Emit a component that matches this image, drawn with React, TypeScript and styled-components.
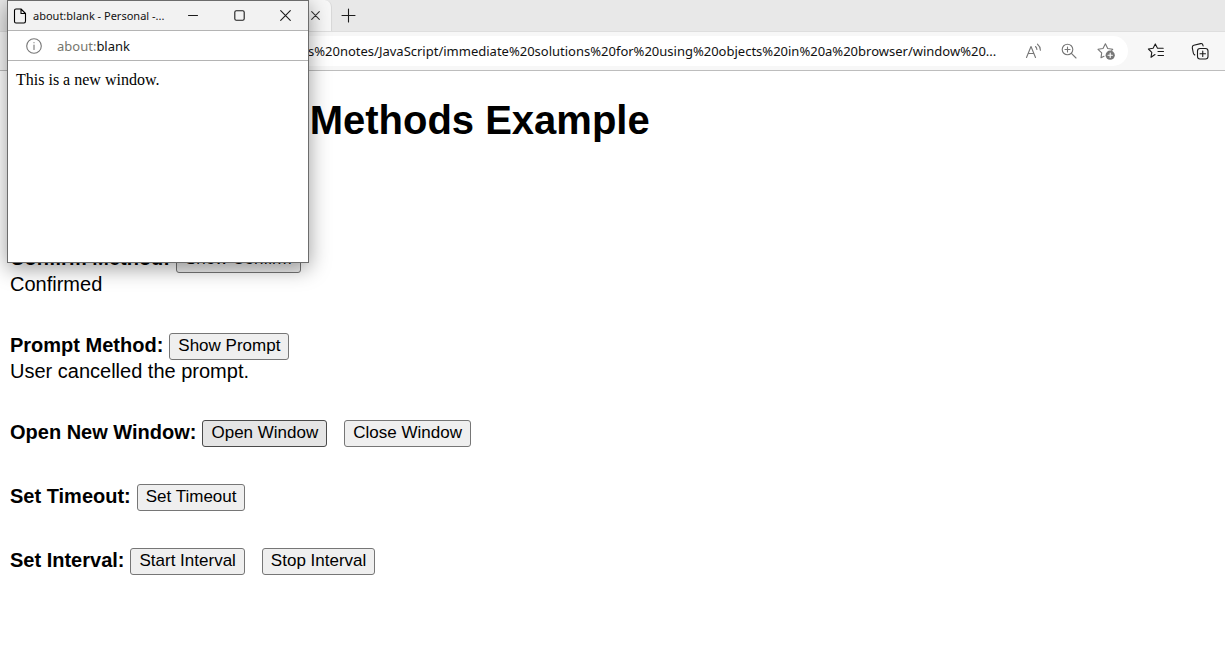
import React from 'react';
import styled, { createGlobalStyle } from 'styled-components';

const GlobalStyle = createGlobalStyle`
  * { box-sizing: border-box; }
  body { margin: 0; background: #fff; color: #000; }
`;

const uiFont = `'Noto Sans', 'Open Sans', sans-serif`;
const pageFont = `'Liberation Sans', Arial, sans-serif`;

const Browser = styled.div`
  position: relative;
  min-height: 100vh;
  overflow: hidden;
`;

const TabStrip = styled.div`
  display: flex;
  height: 31px;
  padding-left: 8px;
  background: #e8e8e8;
`;

const Tab = styled.div`
  display: flex;
  align-items: center;
  justify-content: flex-end;
  width: 324px;
  padding-right: 11px;
  background: #f7f7f7;
  border-right: 1px solid #d9d9d9;
  border-top-right-radius: 7px;
`;

const IconButton = styled.button<{ $width: number; $color?: string }>`
  display: flex;
  align-items: center;
  justify-content: center;
  flex: none;
  width: ${(p) => p.$width}px;
  height: 30px;
  padding: 0;
  border: 0;
  background: transparent;
  color: ${(p) => p.$color ?? '#1b1b1b'};
`;

const Toolbar = styled.div`
  display: flex;
  align-items: center;
  height: 40px;
  padding-left: 60px;
  padding-right: 3px;
  background: #f7f7f7;
  border-top: 1px solid #dedede;
  border-bottom: 1px solid #bdbdbd;
`;

const AddressBar = styled.div`
  display: flex;
  flex: 1;
  align-items: center;
  height: 30px;
  margin-right: 6px;
  padding-left: 248px;
  padding-right: 4px;
  border-radius: 15px;
  background: #fff;
`;

const AddressInput = styled.input`
  flex: 1;
  min-width: 0;
  height: 28px;
  padding: 0;
  border: 0;
  outline: 0;
  background: transparent;
  color: #111;
  font: 13px/18px ${uiFont};
`;

const Page = styled.main`
  padding: 26px 10px;
  font: 20px/23px ${pageFont};
`;

const Title = styled.h1`
  margin: 0 0 16px;
  font-size: 40px;
  line-height: 46px;
  white-space: nowrap;
`;

const Example = styled.section`
  margin-bottom: 37px;
`;

const Row = styled.div`
  display: flex;
  height: 27px;
`;

const Label = styled.strong`
  margin-right: 6px;
  line-height: 25px;
`;

const Actions = styled.div`
  display: flex;
  gap: 17px;
`;

const Action = styled.button<{ $active?: boolean }>`
  height: 27px;
  padding: 0 8px 2px;
  border: 1px solid ${(p) => (p.$active ? '#4a4a4a' : '#767676')};
  border-radius: 3px;
  background: ${(p) => (p.$active ? '#e5e5e5' : '#efefef')};
  color: #000;
  font: 17px/20px ${pageFont};
`;

const Status = styled.p`
  min-height: 23px;
  margin: 0;
`;

const Popup = styled.div`
  position: absolute;
  top: 0;
  left: 7px;
  width: 302px;
  height: 263px;
  border: 1px solid #6c6c6c;
  background: #fff;
  box-shadow: 0 5px 20px rgba(0, 0, 0, 0.4);
`;

const PopupTitleBar = styled.div`
  display: flex;
  align-items: center;
  height: 30px;
  padding-left: 5px;
  border-bottom: 1px solid #b4b4b4;
  background: #f2f2f2;
`;

const PopupTitle = styled.span`
  flex: 1;
  margin-left: 6px;
  color: #111;
  font: 11px/16px ${uiFont};
  white-space: nowrap;
`;

const PopupAddress = styled.div`
  display: flex;
  align-items: center;
  height: 30px;
  padding-left: 18px;
  border-bottom: 1px solid #b4b4b4;
  color: #111;
  font: 13px/18px ${uiFont};
`;

const Scheme = styled.span`
  margin-left: 15px;
  color: #76766e;
`;

const PopupBody = styled.p`
  margin: 0;
  padding: 9px 8px;
  font: 16px/20px 'Liberation Serif', 'Times New Roman', serif;
`;

const Svg = ({ w, h, children }: { w: number; h: number; children: React.ReactNode }) => (
  <svg width={w} height={h} viewBox={`0 0 ${w} ${h}`} fill="none" stroke="currentColor"
    strokeWidth="1.1" strokeLinecap="round" strokeLinejoin="round" aria-hidden="true">
    {children}
  </svg>
);

const Cross = ({ size }: { size: number }) => (
  <Svg w={size} h={size}>
    <path d={`M.7.7 ${size - 0.7} ${size - 0.7}M${size - 0.7}.7.7 ${size - 0.7}`} />
  </Svg>
);

type ExampleData = {
  label: string;
  actions: { text: string; active?: boolean }[];
  status?: string;
};

const examples: ExampleData[] = [
  { label: 'Alert Method:', actions: [{ text: 'Show Alert' }], status: '' },
  { label: 'Confirm Method:', actions: [{ text: 'Show Confirm' }], status: 'Confirmed' },
  { label: 'Prompt Method:', actions: [{ text: 'Show Prompt' }], status: 'User cancelled the prompt.' },
  { label: 'Open New Window:', actions: [{ text: 'Open Window', active: true }, { text: 'Close Window' }] },
  { label: 'Set Timeout:', actions: [{ text: 'Set Timeout' }] },
  { label: 'Set Interval:', actions: [{ text: 'Start Interval' }, { text: 'Stop Interval' }] },
];

export default function App() {
  return (
    <Browser>
      <GlobalStyle />
      <TabStrip>
        <Tab>
          <IconButton $width={10} $color="#333" aria-label="Close tab"><Cross size={9} /></IconButton>
        </Tab>
        <IconButton $width={32} aria-label="New tab">
          <Svg w={15} h={15}><path d="M7.5 1v13M1 7.5h13" /></Svg>
        </IconButton>
      </TabStrip>
      <Toolbar>
        <AddressBar>
          <AddressInput
            aria-label="Address"
            readOnly
            value="s%20notes/JavaScript/immediate%20solutions%20for%20using%20objects%20in%20a%20browser/window%20..."
          />
          <IconButton $width={36} $color="#777" aria-label="Read aloud">
            <Svg w={18} h={18}>
              <path d="M2.500 15.500 7 4.500 11.500 15.500M4 11.500h6" />
              <path d="M11.500 4.500q1.300 1.200 1.400 3M13.500 2.200q2.800 2.200 2.900 6" />
            </Svg>
          </IconButton>
          <IconButton $width={36} $color="#777" aria-label="Zoom">
            <Svg w={16} h={16}>
              <circle cx="6.500" cy="6.500" r="5.300" />
              <path d="m10.400 10.400 4.600 4.600M6.500 4v5M4 6.500h5" />
            </Svg>
          </IconButton>
          <IconButton $width={37} $color="#777" aria-label="Add to favorites">
            <Svg w={18} h={18}>
              <path d="M7 14.300 4 15.800l.7-5L1 7.300l5-.8L8.400 1.700l2.300 4.800 5 .8-1 1" />
              <circle cx="13.200" cy="13.200" r="4.600" fill="currentColor" stroke="none" />
              <path d="M13.200 11v4.400M11 13.200h4.400" stroke="#fff" />
            </Svg>
          </IconButton>
        </AddressBar>
        <IconButton $width={44} aria-label="Favorites">
          <Svg w={18} h={18}>
            <path d="m8 12.500-4 2.800.8-4.900L1.400 7l4.700-.7L8.300 1.900l2.200 4.400h5.700M11 9.500h5.500M11 13.500h5.500" />
          </Svg>
        </IconButton>
        <IconButton $width={44} aria-label="Collections">
          <Svg w={18} h={18}>
            <rect x="6.500" y="6.500" width="10.500" height="10.500" rx="2.500" />
            <path d="M11.750 9v5.500M9 11.750h5.500M3.800 13l-.6-.5q-.7-.6-.9-1.500L1.300 5.800q-.3-2 1.500-2.500L9.600 1.600q1.500-.3 2.100 1l.4 1.300" />
          </Svg>
        </IconButton>
      </Toolbar>
      <Page>
        <Title>Window Object Methods Example</Title>
        {examples.map((e) => (
          <Example key={e.label}>
            <Row>
              <Label>{e.label}</Label>
              <Actions>
                {e.actions.map((a) => (
                  <Action key={a.text} type="button" $active={a.active}>{a.text}</Action>
                ))}
              </Actions>
            </Row>
            {e.status !== undefined && <Status>{e.status}</Status>}
          </Example>
        ))}
      </Page>
      <Popup role="dialog" aria-label="about:blank">
        <PopupTitleBar>
          <Svg w={14} h={16}>
            <path d="M1.500 2.500q0-1.500 1.500-1.500h5l4.500 4.500V13q0 2-1.500 2H3q-1.500 0-1.500-1.500zM8 1v4.500h4.500" />
          </Svg>
          <PopupTitle>about:blank - Personal -...</PopupTitle>
          <IconButton $width={46} aria-label="Minimize">
            <Svg w={10} h={11}><path d="M.5 5.500h9" /></Svg>
          </IconButton>
          <IconButton $width={46} aria-label="Maximize">
            <Svg w={11} h={11}><rect x=".8" y=".8" width="9.400" height="9.400" rx="1.500" /></Svg>
          </IconButton>
          <IconButton $width={46} aria-label="Close"><Cross size={11} /></IconButton>
        </PopupTitleBar>
        <PopupAddress>
          <Svg w={16} h={16}>
            <g stroke="#777">
              <circle cx="8" cy="8" r="7.300" />
              <path d="M8 7v4.500M8 4.600v.2" />
            </g>
          </Svg>
          <Scheme>about:</Scheme>blank
        </PopupAddress>
        <PopupBody>This is a new window.</PopupBody>
      </Popup>
    </Browser>
  );
}
